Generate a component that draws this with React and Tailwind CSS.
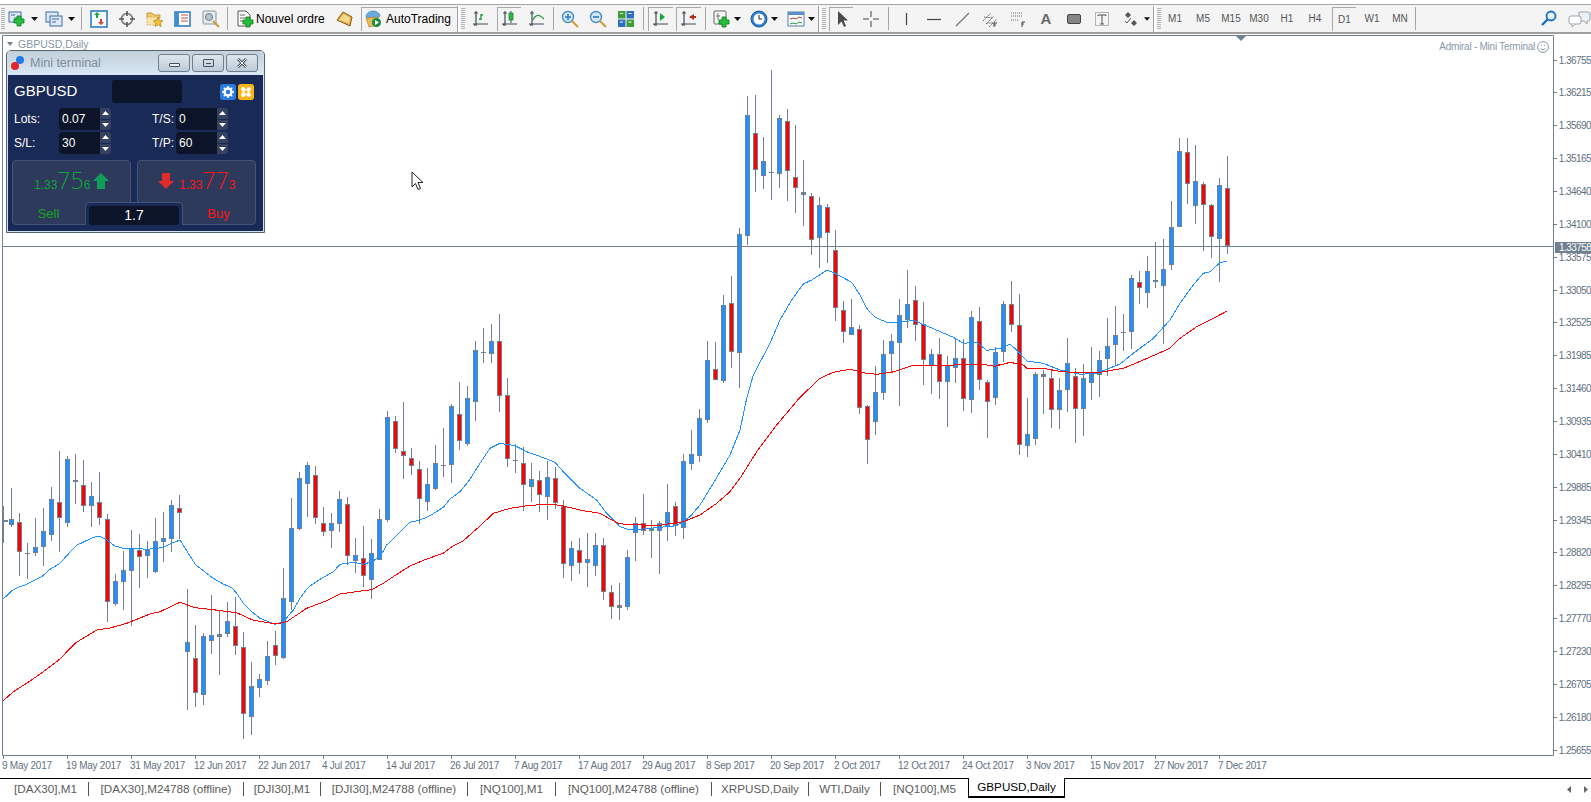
import React from 'react';

// candle rows are read off 3x crops: [high, top, bottom, low, colour], y = y0 + v / 3
const GROUPS = [
  { y0: 430, rows: [
    [228,269,275,338,'b'],[174,267,285,290,'b'],[249,277,365,437,'r'],[339,370,372,446,'b'],[264,352,368,378,'b'],
    [234,303,350,408,'b'],[171,207,314,333,'b'],[63,217,263,366,'r'],[78,87,278,291,'b'],[72,151,155,222,'b'],
    [90,166,227,246,'r'],[156,198,227,291,'b'],[126,217,263,285,'r'],[252,268,517,576,'r'],[432,454,522,528,'b'],
    [363,421,455,540,'b'],[300,355,422,588,'b'],[312,360,380,474,'r'],[333,360,377,444,'b'],[264,334,425,429,'b'],
    [246,324,335,396,'b'],[210,225,326,366,'b'],[195,235,248,328,'r'],[477,637,665,840,'b'],[585,685,790,831,'r'],
    [609,619,794,825,'b'],[495,616,632,672,'b'],[540,613,620,735,'b'],[516,574,613,621,'b'],[501,589,647,675,'r'],
    [606,652,853,927,'r'],[696,769,860,915,'b'],[732,748,773,802,'b'],[633,679,752,765,'b'],[603,646,677,705,'r'],
    [414,505,684,687,'b'],[204,295,515,540,'b'],[126,145,297,300,'b'],[96,106,161,261,'b'],[108,136,265,282,'r'],
    [231,280,307,318,'r'],[249,280,303,354,'b'],[183,208,281,306,'b'],[201,223,377,405,'r'],[324,376,392,429,'b'],
    [288,385,439,471,'r'],[327,370,449,507,'b'],[237,268,389,390,'b'],[-57,-39,270,276,'b'],[-42,-27,58,68,'r'],
  ] },
  { y0: 300, rows: [
    [306,454,469,537,'r'],[444,475,499,525,'r'],[483,508,598,671,'r'],[504,553,607,634,'b'],[435,490,568,570,'b'],
    [384,496,499,531,'b'],[312,319,496,549,'b'],[246,343,424,450,'r'],[258,295,431,438,'b'],[123,151,307,363,'b'],
    [84,157,160,189,'b'],[72,124,163,189,'b'],[42,124,289,336,'r'],[234,286,478,501,'r'],[432,481,484,519,'b'],
    [441,490,556,633,'r'],[489,538,562,606,'b'],[513,541,586,636,'r'],[483,532,592,660,'b'],[501,535,610,627,'r'],
    [600,619,793,834,'r'],[723,745,799,843,'b'],[714,751,790,822,'r'],[699,778,790,861,'b'],[699,736,799,828,'b'],
    [714,736,877,900,'r'],[855,877,922,957,'r'],[849,916,925,960,'b'],[750,772,922,930,'b'],[651,670,700,783,'b'],
    [582,670,694,705,'r'],[660,685,694,774,'b'],[663,670,694,822,'b'],[552,637,682,723,'b'],[606,619,676,708,'r'],
    [462,484,685,717,'b'],[390,463,493,510,'b'],[327,355,469,486,'b'],[123,181,361,369,'b'],[126,208,241,241,'r'],
  ] },
  { y0: 60, rows: [
    [705,735,963,969,'b'],[648,729,876,924,'r'],[504,523,878,984,'b'],[108,165,527,555,'b'],[105,220,331,396,'r'],
    [231,304,347,387,'b'],[30,336,339,420,'b'],[165,175,341,384,'b'],[147,184,334,423,'r'],[195,352,385,459,'r'],
    [300,397,406,498,'r'],[399,409,541,585,'r'],[411,436,535,624,'b'],[432,442,520,609,'r'],[510,571,745,783,'r'],
    [723,751,817,849,'r'],[717,802,826,826,'b'],[795,808,1045,1062,'r'],[1035,1039,1141,1212,'r'],[918,997,1087,1125,'b'],
    [840,883,1000,1020,'b'],[822,844,883,936,'b'],[717,766,850,1038,'b'],[630,733,781,804,'b'],[678,721,796,843,'r'],
    [726,793,901,975,'r'],[867,883,919,1002,'b'],[834,883,967,1017,'r'],[888,916,967,1101,'b'],[837,895,925,969,'b'],
    [837,895,1018,1053,'r'],[753,772,1021,1059,'b'],[741,784,961,990,'r'],[960,967,1027,1134,'r'],[861,877,1015,1035,'b'],
  ] },
  { y0: 130, rows: [
    [513,523,667,696,'b'],[453,523,586,606,'r'],[492,586,946,975,'r'],[804,913,949,981,'b'],[727,733,928,945,'b'],
    [720,733,742,852,'r'],[720,745,841,894,'r'],[744,781,841,897,'b'],[624,700,781,846,'b'],[714,739,838,939,'r'],
    [702,745,838,918,'b'],[651,733,760,810,'b'],[663,691,736,801,'b'],[564,649,688,738,'b'],[528,616,646,708,'b'],
    [552,607,610,663,'b'],[435,445,607,657,'b'],[423,457,475,522,'r'],[378,424,490,534,'b'],[336,451,457,474,'r'],
    [327,418,469,642,'b'],[213,292,406,420,'b'],[24,64,292,292,'b'],[24,67,163,222,'r'],[45,154,229,282,'b'],
    [156,163,226,363,'r'],[222,226,322,384,'r'],[144,166,328,456,'b'],[78,175,349,372,'r'],
  ] },
];

const candles = GROUPS.flatMap((g) =>
  g.rows.map(([h, t, b, l, c]) => ({
    h: Math.round(g.y0 + h / 3),
    t: Math.round(g.y0 + t / 3),
    b: Math.round(g.y0 + b / 3),
    l: Math.round(g.y0 + l / 3),
    c,
  }))
);

const crop = (x0, y0, list) => list.map(([x, y]) => `${(x0 + x / 3).toFixed(1)},${(y0 + y / 3).toFixed(1)}`).join(' ');

const BLUE_MA = [
  crop(0, 430, [[10,507],[35,482],[50,474],[80,463],[125,440],[150,418],[180,400],[205,372],[230,346],[255,334],[280,322],[300,319],[320,330],[345,348],[370,355],[400,355],[440,358],[470,355],[490,352],[515,340],[540,330],[562,365],[587,405],[610,422],[640,445],[670,462],[695,473],[710,490],[730,520],[755,545],[780,565],[825,583],[850,575],[880,540],[900,505],[925,472],[960,448],[1000,425],[1020,403],[1060,397],[1090,403],[1115,395],[1140,380],[1160,345],[1200,307]]),
  crop(400, 300, [[30,667],[60,660],[90,647],[130,622],[150,597],[180,575],[205,545],[240,490],[270,445],[300,430],[345,437],[380,455],[430,473],[465,487],[490,515],[540,565],[590,600],[620,640],[660,680],[690,690],[730,687],[830,677],[870,650],[900,615],[940,550],[990,465],[1020,390],[1040,295],[1060,225],[1110,130],[1140,60],[1175,0]]),
  crop(700, 60, [[310,672],[335,660],[380,631],[400,637],[455,667],[480,705],[500,745],[525,772],[560,787],[600,787],[640,781],[700,806],[760,832],[790,850],[830,847],[860,871],[900,865]]),
  crop(980, 130, [[90,643],[110,660],[140,693],[190,700],[240,720],[300,733],[350,730],[420,702],[460,670],[520,625],[570,570],[600,520],[640,465],[670,430],[690,425],[720,398],[740,394]]),
].join(' ');

const RED_MA = [
  crop(0, 430, [[10,812],[40,785],[80,760],[130,725],[180,687],[225,640],[290,600],[330,594],[380,580],[450,552],[480,545],[540,517],[585,533],[630,538],[710,548],[760,571],[830,582],[860,575],[920,535],[980,512],[1020,492],[1090,482],[1115,479],[1150,460],[1200,427]]),
  crop(400, 300, [[30,798],[80,777],[130,760],[160,737],[190,722],[240,678],[280,640],[330,625],[390,616],[450,613],[480,616],[550,632],[600,640],[650,668],[680,674],[780,676],[850,665],[900,645],[950,610],[990,575],[1020,535],[1070,455],[1130,375],[1200,292]]),
  crop(700, 60, [[360,955],[400,937],[450,928],[500,940],[530,943],[575,937],[640,916],[740,916],[840,912],[885,919],[900,912]]),
  crop(980, 130, [[50,708],[90,697],[130,705],[140,715],[200,717],[240,724],[290,728],[360,727],[430,715],[490,690],[570,655],[600,625],[650,590],[690,570],[740,544]]),
].join(' ');

const PRICES = ['1.36755','1.36215','1.35690','1.35165','1.34640','1.34100','1.33575','1.33050','1.32525','1.31985','1.31460','1.30935','1.30410','1.29885','1.29345','1.28820','1.28295','1.27770','1.27230','1.26705','1.26180','1.25655'];
const DATES = ['9 May 2017','19 May 2017','31 May 2017','12 Jun 2017','22 Jun 2017','4 Jul 2017','14 Jul 2017','26 Jul 2017','7 Aug 2017','17 Aug 2017','29 Aug 2017','8 Sep 2017','20 Sep 2017','2 Oct 2017','12 Oct 2017','24 Oct 2017','3 Nov 2017','15 Nov 2017','27 Nov 2017','7 Dec 2017'];

function Icon({ children, w = 18, h = 18 }) {
  return <svg width={w} height={h} viewBox={`0 0 ${w} ${h}`} className="block shrink-0">{children}</svg>;
}

const Plus = ({ x = 8, y = 8 }) => (
  <path d={`M${x + 3} ${y}h4v3h3v4h-3v3h-4v-3h-3v-4h3z`} fill="#25c03a" stroke="#0e7a1e" strokeWidth="0.8" />
);
const Axes = () => <path d="M4 1v15M1 14h15M2 3h4M2 15h1" stroke="#3c4a58" strokeWidth="1.2" fill="none" />;

function Slot({ children, className = 'w-[28px]' }) {
  return <div className={`flex h-[24px] shrink-0 items-center justify-center ${className}`}>{children}</div>;
}

function Pressed({ children, className = 'w-[24px]' }) {
  return <div className={`flex h-[24px] shrink-0 items-center justify-center border-t border-l border-[#a8a8a8] ${className}`}>{children}</div>;
}

function Caret({ className = 'w-[10px]' }) {
  return (
    <div className={`flex shrink-0 justify-center ${className}`}>
      <svg width="7" height="4" viewBox="0 0 7 4"><path d="M0 0h7L3.5 4z" fill="#111" /></svg>
    </div>
  );
}

function Sep({ className = '' }) {
  return <div className={`h-[23px] w-px shrink-0 bg-[#a6a6a6] ${className}`} />;
}

function Grip({ className = '' }) {
  return <div className={`h-[22px] w-[4px] shrink-0 bg-[repeating-linear-gradient(#b4b4b4_0,#b4b4b4_1px,transparent_1px,transparent_2px)] ${className}`} />;
}

function DoubleSep({ className = '' }) {
  return <div className={`h-[26px] w-[3px] shrink-0 border-l border-[#a0a0a0] bg-white ${className}`} />;
}

function Tf({ label, className = 'w-[28px]' }) {
  return <Slot className={className}><span className="text-[10px] text-[#555]">{label}</span></Slot>;
}

function Toolbar() {
  return (
    <div className="flex h-[27px] items-center bg-[#f4f4f4] pl-px">
      <Grip />
      <Slot className="w-[24px]">
        <Icon><rect x="1" y="2" width="12" height="10" fill="#dfe9f5" stroke="#3f6fa8" /><path d="M3 5h4M6 8h4" stroke="#3f6fa8" /><Plus x={6} y={6} /></Icon>
      </Slot>
      <Caret />
      <Slot className="ml-[3px] w-[24px]">
        <Icon><rect x="1" y="2" width="12" height="10" fill="#dfe9f5" stroke="#3f6fa8" /><rect x="5" y="6" width="12" height="10" fill="#dfe9f5" stroke="#3f6fa8" /><path d="M7 9h7M7 12h4" stroke="#3f6fa8" /></Icon>
      </Slot>
      <Caret />
      <Sep className="ml-[5px]" />
      <Slot className="ml-[3px] w-[28px]">
        <Icon><rect x="1" y="1" width="16" height="16" fill="#f6fbff" stroke="#2f7fc4" strokeWidth="1.6" /><path d="M6 8V5H4l3-3 3 3H8v3z" fill="#1ea53c" /><path d="M10 9v3H8l3 3 3-3h-2V9z" fill="#d9402e" /></Icon>
      </Slot>
      <Slot>
        <Icon><circle cx="9" cy="9" r="5.5" fill="none" stroke="#7a7a7a" strokeWidth="1.6" /><path d="M9 1v5M9 12v5M1 9h5M12 9h5" stroke="#555" strokeWidth="1.6" /></Icon>
      </Slot>
      <Slot>
        <Icon><path d="M1 3h5l2 2h6v3H1z" fill="#f2cb69" stroke="#b98c2c" strokeWidth="0.8" /><path d="M1 7h10v8H1z" fill="#fbe5a6" stroke="#c9a24a" strokeWidth="0.7" strokeDasharray="2 1" /><path d="M12 7l1.6 3.4 3.4.4-2.6 2.3.8 3.4-3.2-1.8-3 1.8.7-3.4-2.5-2.3 3.4-.4z" fill="#f1c232" stroke="#a9812a" strokeWidth="0.7" /></Icon>
      </Slot>
      <Slot>
        <Icon><rect x="1" y="2" width="15" height="14" fill="#fff" stroke="#2f7fc4" strokeWidth="1.6" /><rect x="1" y="2" width="4" height="14" fill="#3f8dd2" /><path d="M7 5h7M7 8h7M7 11h7" stroke="#c05040" /></Icon>
      </Slot>
      <Slot>
        <Icon><rect x="1" y="1" width="13" height="13" rx="1" fill="#e6eaee" stroke="#8a96a3" /><circle cx="7" cy="7" r="3.5" fill="#b7c4d2" stroke="#707a85" /><path d="M11 11l6 6" stroke="#c99b35" strokeWidth="2" /></Icon>
      </Slot>
      <Sep className="ml-[2px]" />
      <div className="ml-[9px] flex w-[19px] shrink-0">
        <Icon><path d="M1 1h8l4 4v11H1z" fill="#fff" stroke="#555" /><path d="M3 5h5M3 8h7M3 11h4" stroke="#666" /><Plus x={6} y={7} /></Icon>
      </div>
      <span className="w-[70px] shrink-0 text-[12px] text-black">Nouvel ordre</span>
      <Slot className="ml-[9px] w-[20px]">
        <Icon><path d="M1 10L7 2l9 5-2 9z" fill="#e2b04a" stroke="#8a5a14" /><path d="M3 10l5-6 6 4-1 5z" fill="#f6d98c" /></Icon>
      </Slot>
      <div className="ml-[6px] flex h-[24px] w-[96px] shrink-0 items-center border-t border-l border-[#a8a8a8] pl-[2px]">
        <Icon><path d="M2 7c0-4 4-6 7-6s7 2 7 5l-2 2H3z" fill="#6aa9dc" stroke="#3f78a8" strokeWidth="0.6" /><path d="M2 8l11-1 2 8-10 2z" fill="#e4bb55" stroke="#a07c2a" strokeWidth="0.6" /><circle cx="12.5" cy="12.5" r="4.5" fill="#1e8c38" /><path d="M11 10l4 2.5-4 2.5z" fill="#fff" /></Icon>
        <span className="ml-[4px] text-[12px] text-black">AutoTrading</span>
      </div>
      <DoubleSep />
      <Grip className="ml-[1px]" />
      <Slot className="ml-[1px] w-[30px]">
        <Icon><Axes /><path d="M9 4v6M7 9h2M9 5h2" stroke="#1c9a3c" strokeWidth="1.3" /></Icon>
      </Slot>
      <Pressed className="ml-[1px] w-[24px]">
        <Icon><Axes /><path d="M10 1v12" stroke="#3c4a58" /><rect x="8" y="3" width="4" height="7" fill="#2bb84a" stroke="#187a2e" strokeWidth="0.7" /></Icon>
      </Pressed>
      <Slot className="ml-[2px] w-[28px]">
        <Icon><Axes /><path d="M5 10c3-6 6-6 11-1" stroke="#1c9a3c" strokeWidth="1.1" fill="none" /></Icon>
      </Slot>
      <Sep className="ml-[2px]" />
      <Slot className="ml-[2px] w-[28px]">
        <Icon><circle cx="7" cy="7" r="5.5" fill="#cfe6f8" stroke="#4a8cc2" strokeWidth="1.4" /><path d="M4 7h6M7 4v6" stroke="#2f78b8" strokeWidth="1.6" /><path d="M11 11l6 6" stroke="#d1a23c" strokeWidth="2.2" /></Icon>
      </Slot>
      <Slot>
        <Icon><circle cx="7" cy="7" r="5.5" fill="#cfe6f8" stroke="#4a8cc2" strokeWidth="1.4" /><path d="M4 7h6" stroke="#2f78b8" strokeWidth="1.6" /><path d="M11 11l6 6" stroke="#d1a23c" strokeWidth="2.2" /></Icon>
      </Slot>
      <Slot>
        <Icon><rect x="1" y="1" width="7.5" height="7.5" fill="#3f9e3a" /><rect x="9.5" y="1" width="7.5" height="7.5" fill="#2f6fc4" /><rect x="1" y="9.5" width="7.5" height="7.5" fill="#2f6fc4" /><rect x="9.5" y="9.5" width="7.5" height="7.5" fill="#3f9e3a" /><path d="M3 3.5h3M11.500 3.500h3M3 12h3M11.500 12h3" stroke="#fff" /></Icon>
      </Slot>
      <Sep className="ml-[3px]" />
      <Pressed className="ml-[4px] w-[25px]">
        <Icon><Axes /><path d="M8 3l5 4-5 4z" fill="#1ea53c" /></Icon>
      </Pressed>
      <Pressed className="ml-[3px] w-[25px]">
        <Icon><Axes /><path d="M9 7l5-3v2h2v2h-2v2z" fill="#b03020" /></Icon>
      </Pressed>
      <Sep className="ml-[4px]" />
      <Slot className="ml-[5px] w-[22px]">
        <Icon><rect x="1" y="1" width="12" height="13" rx="1" fill="#f7f7f7" stroke="#666" /><path d="M5 3v7M3 6h4" stroke="#777" /><Plus x={6} y={7} /></Icon>
      </Slot>
      <Caret className="w-[8px]" />
      <Slot className="ml-[7px] w-[22px]">
        <Icon><circle cx="9" cy="9" r="8" fill="#2f7fd6" stroke="#175a9f" /><circle cx="9" cy="9" r="5.5" fill="#fff" /><path d="M9 5v4h3" stroke="#222" fill="none" /></Icon>
      </Slot>
      <Caret className="w-[8px]" />
      <Slot className="ml-[7px] w-[22px]">
        <Icon><rect x="1" y="2" width="16" height="14" fill="#f8fbfe" stroke="#5a7fa8" /><rect x="1" y="2" width="16" height="3" fill="#5b8ec4" /><path d="M3 9l3-1 3 1 3-2 3 1" stroke="#c04030" fill="none" /><path d="M3 14l3-1 3 1 3-2 3 1" stroke="#2a9a3a" fill="none" /></Icon>
      </Slot>
      <Caret className="w-[8px]" />
      <DoubleSep className="ml-[3px]" />
      <Grip className="ml-[1px]" />
      <Pressed className="ml-[3px] w-[24px]">
        <Icon><path d="M5 1v14l3.500-3.500 2.500 5.500 2-1-2.500-5.500H15z" fill="#4a4a4a" /></Icon>
      </Pressed>
      <Slot className="ml-[4px] w-[28px]">
        <Icon><path d="M9 1v6M9 11v6M1 9h6M11 9h6" stroke="#444" strokeWidth="1" /></Icon>
      </Slot>
      <Sep className="ml-[3px]" />
      <Slot className="ml-[3px] w-[28px]"><Icon><path d="M9.500 3v12" stroke="#444" strokeWidth="1.2" /></Icon></Slot>
      <Slot><Icon><path d="M2 9.500h14" stroke="#444" strokeWidth="1.2" /></Icon></Slot>
      <Slot><Icon><path d="M3 16L16 3" stroke="#777" strokeWidth="1.2" /></Icon></Slot>
      <Slot><Icon><path d="M2 11l8-8M5 14l8-8M8 17l8-8M3 7l9 1M6 13l8 0" stroke="#666" strokeDasharray="1.500 0.700" /><path d="M13 17v-4h3M13 15h2" stroke="#444" fill="none" /></Icon></Slot>
      <Slot><Icon><path d="M2 3h11M2 6h11M2 10h8" stroke="#666" strokeDasharray="1 1" /><path d="M13 17v-5h3M13 14h2" stroke="#444" fill="none" /></Icon></Slot>
      <Slot><span className="text-[15px] font-bold leading-none text-[#6a6a6a]">A</span></Slot>
      <Slot><div className="h-[10px] w-[14px] rounded-[2px] border border-[#444] bg-[#858585]" /></Slot>
      <Slot>
        <Icon><rect x="2.500" y="2.500" width="13" height="13" fill="none" stroke="#777" strokeDasharray="1 1" /><path d="M5 6V5h8v1M9 5v9M7 14h4" stroke="#555" fill="none" /></Icon>
      </Slot>
      <Slot>
        <Icon><path d="M7 2l3 3-3 3-3-3zM13 10l3 3-3 3-3-3z" fill="#555" /><path d="M4 11l2 2 4-5" stroke="#555" fill="none" /></Icon>
      </Slot>
      <Caret className="w-[6px]" />
      <DoubleSep className="ml-[3px]" />
      <Grip className="ml-[1px]" />
      <Tf label="M1" />
      <Tf label="M5" />
      <Tf label="M15" />
      <Tf label="M30" />
      <Tf label="H1" />
      <Tf label="H4" />
      <Pressed className="ml-[3px] w-[24px]"><span className="text-[10px] text-[#555]">D1</span></Pressed>
      <Tf label="W1" className="ml-[2px] w-[28px]" />
      <Tf label="MN" />
      <Sep className="ml-[1px]" />
      <div className="flex-1" />
      <Slot className="w-[20px]">
        <Icon><circle cx="11" cy="6" r="4.500" fill="#e8f3fc" stroke="#1f6fc0" strokeWidth="1.800" /><path d="M8 9l-6 6" stroke="#1f6fc0" strokeWidth="2.400" /></Icon>
      </Slot>
      <Slot className="ml-[8px] w-[24px]">
        <Icon w={24}><path d="M12 2h9a2 2 0 012 2v5a2 2 0 01-2 2h-1v3l-3-3h-5z" fill="#eef1f4" stroke="#9aa4ad" /><rect x="2" y="6" width="12" height="8" rx="2" fill="#fff" stroke="#9aa4ad" /><path d="M5 14v3l3-3" fill="#fff" stroke="#9aa4ad" /></Icon>
      </Slot>
    </div>
  );
}

function Chart() {
  return (
    <svg width="1554" height="721" viewBox="0 35 1554 721" className="block">
      <path d="M2.500 35.500H1553.500V755.500H2.500Z" fill="none" stroke="#708090" />
      <g shapeRendering="crispEdges">
        {candles.map((k, i) => {
          const x = 3 + 8 * i;
          const doji = k.b - k.t <= 3;
          return (
            <g key={i}>
              <line x1={x + 0.5} x2={x + 0.5} y1={k.h} y2={k.l} stroke="#708090" />
              {doji ? (
                <rect x={Math.max(x - 2, 3)} y={k.t} width={5} height={Math.max(k.b - k.t, 1)} fill="#708090" />
              ) : (
                <rect x={x - 1.5} y={k.t + 0.5} width={4} height={k.b - k.t - 1} fill={k.c === 'r' ? '#ff0000' : '#1e90ff'} stroke="#708090" />
              )}
            </g>
          );
        })}
        <polyline points={BLUE_MA} fill="none" stroke="#1e90ff" strokeWidth="1" />
        <polyline points={RED_MA} fill="none" stroke="#ff0000" strokeWidth="1" />
      </g>
      <line x1="3" x2="1553" y1="246.500" y2="246.500" stroke="#708090" />
    </svg>
  );
}

function Spinner() {
  return (
    <div className="flex h-full w-[11px] shrink-0 flex-col gap-px">
      <div className="flex flex-1 items-center justify-center rounded-tr-[3px] bg-[#34415f]">
        <svg width="7" height="4" viewBox="0 0 7 4"><path d="M0 4h7L3.500 0z" fill="#fff" /></svg>
      </div>
      <div className="flex flex-1 items-center justify-center rounded-br-[3px] bg-[#34415f]">
        <svg width="7" height="4" viewBox="0 0 7 4"><path d="M0 0h7L3.500 4z" fill="#fff" /></svg>
      </div>
    </div>
  );
}

function Field({ label, value, className = '', labelWidth = 'w-[45px]' }) {
  return (
    <div className={`flex h-[22px] items-center ${className}`}>
      <span className={`shrink-0 text-[12px] text-white ${labelWidth}`}>{label}</span>
      <div className="flex h-full w-[41px] shrink-0 items-center rounded-l-[4px] bg-[#0c1429] pl-[3px] text-[12px] text-white">{value}</div>
      <Spinner />
    </div>
  );
}

function MiniTerminal() {
  return (
    <div className="absolute left-[6px] top-[15px] flex h-[183px] w-[259px] flex-col rounded-t-[5px] border border-[#56626e] bg-[#cfe0ee] px-[1px] pb-[1px]">
      <div className="flex h-[24px] shrink-0 items-start bg-gradient-to-b from-[#c3d0da] to-[#d8e8f5]">
        <div className="relative ml-[3px] mt-[3px] h-[18px] w-[18px] shrink-0">
          <div className="absolute left-[5px] top-[2px] h-[8px] w-[8px] rounded-full bg-[#1f7ae8]" />
          <div className="absolute left-0 top-[8px] h-[8px] w-[8px] rounded-full bg-[#e3262c]" />
        </div>
        <span className="ml-[1px] mt-[6px] w-[128px] shrink-0 text-[12.500px] leading-none text-[#7f8c99]">Mini terminal</span>
        <div className="mt-[3px] flex gap-[2px]">
          {['min', 'max', 'close'].map((b) => (
            <div key={b} className="flex h-[18px] w-[32px] items-center justify-center rounded-[3px] border border-[#6f7e8c] bg-gradient-to-b from-[#dfe6ec] to-[#bccbd8]">
              {b === 'min' && <div className="mt-[3px] h-[4px] w-[11px] rounded-[1px] border border-[#44505c] bg-[#eef2f5]" />}
              {b === 'max' && <div className="flex h-[8px] w-[11px] items-center justify-center rounded-[1px] border border-[#44505c]"><div className="h-px w-[5px] bg-[#44505c]" /></div>}
              {b === 'close' && (
                <svg width="12" height="10" viewBox="0 0 12 10"><path d="M2 1l8 8M10 1l-8 8" stroke="#4a5662" strokeWidth="2.600" /><path d="M2 1l8 8M10 1l-8 8" stroke="#fff" strokeWidth="1" /></svg>
              )}
            </div>
          ))}
        </div>
      </div>
      <div className="flex-1 bg-[#192a56] pl-[6px] pt-[5px]">
        <div className="flex h-[23px] items-center">
          <span className="-mt-[3px] w-[98px] shrink-0 text-[15px] leading-none text-white">GBPUSD</span>
          <div className="h-[23px] w-[70px] shrink-0 rounded-[3px] bg-[#0c1429]" />
          <div className="ml-[38px] flex h-[16px] w-[16px] items-center justify-center rounded-[3px] bg-[#2c7ce0]">
            <svg width="12" height="12" viewBox="0 0 12 12"><circle cx="6" cy="6" r="3.500" fill="none" stroke="#fff" strokeWidth="2.400" /><path d="M6 0v2M6 10v2M0 6h2M10 6h2M1.800 1.800l1.400 1.400M8.800 8.800l1.400 1.400M10.200 1.800L8.800 3.200M3.200 8.800l-1.400 1.400" stroke="#fff" strokeWidth="1.400" /></svg>
          </div>
          <div className="ml-[2px] flex h-[16px] w-[16px] items-center justify-center rounded-[3px] bg-[#fdb418]">
            <svg width="12" height="12" viewBox="0 0 12 12"><path d="M1 3a2 2 0 014 0h2a2 2 0 114 0v0a2 2 0 01-1.500 2v2a2 2 0 11-2.500 2.500H5A2 2 0 112.500 7V5A2 2 0 011 3z" fill="#fff" /><rect x="4.500" y="4.500" width="3" height="3" fill="#fdb418" /></svg>
          </div>
        </div>
        <div className="mt-[5px] flex">
          <Field label="Lots:" value="0.07" />
          <Field label="T/S:" value="0" className="ml-[41px]" labelWidth="w-[24px]" />
        </div>
        <div className="mt-[2px] flex">
          <Field label="S/L:" value="30" />
          <Field label="T/P:" value="60" className="ml-[41px]" labelWidth="w-[24px]" />
        </div>
        <div className="relative ml-[-2px] mt-[6px] flex h-[65px] w-[244px] gap-[6px]">
          <div className="flex w-[119px] flex-col rounded-[4px] border border-[#43537a] bg-[#2d3a5b]">
            <div className="flex h-[43px] shrink-0 items-center pb-[3px] pl-[21px]">
              <div className="flex items-baseline text-[#0ea53a]">
                <span className="text-[12px]">1.33</span>
                <span className="font-['Open_Sans'] text-[23px] font-light leading-none">75</span>
                <span className="text-[12px]">6</span>
              </div>
              <svg width="16" height="16" viewBox="0 0 16 16" className="ml-[3px]"><path d="M8 0l8 8h-4v8H4V8H0z" fill="#0f9d58" /></svg>
            </div>
            <div className="w-[71px] text-center text-[13px] leading-[19px] text-[#14a51e]">Sell</div>
          </div>
          <div className="flex w-[119px] flex-col items-end rounded-[4px] border border-[#43537a] bg-[#2d3a5b]">
            <div className="flex h-[43px] w-full shrink-0 items-center pb-[3px] pl-[20px]">
              <svg width="16" height="16" viewBox="0 0 16 16" className="mr-[5px]"><path d="M8 16l8-8h-4V0H4v8H0z" fill="#e02b2b" /></svg>
              <div className="flex items-baseline text-[#ff1414]">
                <span className="text-[12px]">1.33</span>
                <span className="font-['Open_Sans'] text-[23px] font-light leading-none">77</span>
                <span className="text-[12px]">3</span>
              </div>
            </div>
            <div className="w-[73px] text-center text-[13px] leading-[19px] text-[#ff1414]">Buy</div>
          </div>
          <div className="absolute bottom-0 left-[73px] flex h-[23px] w-[98px] justify-center rounded-t-[5px] border border-b-0 border-[#43537a] bg-[#192a56] pt-[3px]">
            <div className="flex h-[19px] w-[90px] items-center justify-center rounded-[3px] bg-[#0c1429] text-[14px] text-white">1.7</div>
          </div>
        </div>
      </div>
    </div>
  );
}

const TABS = [
  ['[DAX30],M1', 'w-[89px] justify-start pl-[14px]'],
  ['[DAX30],M24788 (offline)', 'w-[155px] justify-center'],
  ['[DJI30],M1', 'w-[77px] justify-center'],
  ['[DJI30],M24788 (offline)', 'w-[147px] justify-center'],
  ['[NQ100],M1', 'w-[88px] justify-center'],
  ['[NQ100],M24788 (offline)', 'w-[156px] justify-center'],
  ['XRPUSD,Daily', 'w-[97px] justify-center'],
  ['WTI,Daily', 'w-[72px] justify-center'],
  ['[NQ100],M5', 'w-[87px] justify-center'],
];

function Tabs() {
  return (
    <div className="flex h-[24px] items-start border-t border-black text-[11.7px] text-[#5c5c5c]">
      {TABS.map(([label, cls], i) => (
        <div key={label} className={`mt-[3px] flex h-[14px] shrink-0 items-center whitespace-nowrap ${i < 8 ? 'border-r border-[#555]' : ''} ${cls}`}>
          {label}
        </div>
      ))}
      <div className="mt-[-1px] flex h-[20px] w-[97px] shrink-0 items-center justify-center border-x-[1.5px] border-b-2 border-x-black border-b-black bg-white text-black">GBPUSD,Daily</div>
      <div className="flex-1" />
      <div className="mr-[3px] mt-[7px] flex gap-[13px]">
        <svg width="4" height="7" viewBox="0 0 4 7"><path d="M4 0v7L0 3.500z" fill="#666" /></svg>
        <svg width="4" height="7" viewBox="0 0 4 7"><path d="M0 0v7l4-3.500z" fill="#666" /></svg>
      </div>
    </div>
  );
}

export default function App() {
  return (
    <div className="flex h-[802px] w-[1591px] flex-col overflow-hidden bg-white font-['Liberation_Sans',Arial,sans-serif]">
      <div className="h-[5px] shrink-0 border-b border-[#a4a4a4]" />
      <Toolbar />
      <div className="h-[3px] shrink-0 border-t-2 border-[#a0a0a0]" />
      <div className="flex h-[743px] shrink-0 flex-col">
        <div className="flex h-[720px] shrink-0">
          <div className="relative h-[721px] w-[1554px] shrink-0">
            <Chart />
            <div className="absolute left-[7px] top-[4px] flex items-center text-[10.500px] leading-none text-[#8595a5]">
              <svg width="6" height="4" viewBox="0 0 6 4" className="mr-[5px]"><path d="M0 0h6L3 4z" fill="#708090" /></svg>
              GBPUSD,Daily
            </div>
            <svg width="10" height="5" viewBox="0 0 10 5" className="absolute left-[1236px] top-px"><path d="M0 0h10L5 5z" fill="#708090" /></svg>
            <div className="absolute right-[5px] top-[4px] flex items-center text-[10px] tracking-[-0.25px] text-[#8a99a8]">
              Admiral - Mini Terminal
              <svg width="12" height="12" viewBox="0 0 12 12" className="ml-[2px]"><circle cx="6" cy="6" r="5.400" fill="none" stroke="#8a99a8" /><path d="M3.500 7.500c1.500 1.500 3.500 1.500 5 0M4 4.500h1M7 4.500h1" stroke="#8a99a8" fill="none" /></svg>
            </div>
            <MiniTerminal />
            <svg width="13" height="20" viewBox="0 0 13 20" className="absolute left-[411px] top-[136px]"><path d="M1 1v15l3.500-3.500 2.500 6 2.500-1-2.500-6h5z" fill="#fff" stroke="#222" /></svg>
          </div>
          <div className="relative flex-1 overflow-hidden pt-[8.600px] text-[#5f7080]">
            {PRICES.map((p) => (
              <div key={p} className="flex h-[32.860px] items-center whitespace-nowrap text-[10px] tracking-[-0.55px]">
                <div className="mr-[2px] h-px w-[3px] bg-[#708090]" />
                {p}
              </div>
            ))}
            <div className="absolute left-px top-[207px] flex h-[11px] w-[40px] items-center bg-[#708090] pl-[4px] text-[10px] tracking-[-0.55px] text-white">1.33758</div>
          </div>
        </div>
        <div className="flex pl-[3px] text-[10px] tracking-[-0.25px] text-[#5f7080]">
          {DATES.map((d) => (
            <div key={d} className="w-[64px] shrink-0 whitespace-nowrap">
              <div className="h-[4px] w-px bg-[#708090]" />
              <div className="-ml-px mt-[-1px]">{d}</div>
            </div>
          ))}
        </div>
      </div>
      <Tabs />
    </div>
  );
}
